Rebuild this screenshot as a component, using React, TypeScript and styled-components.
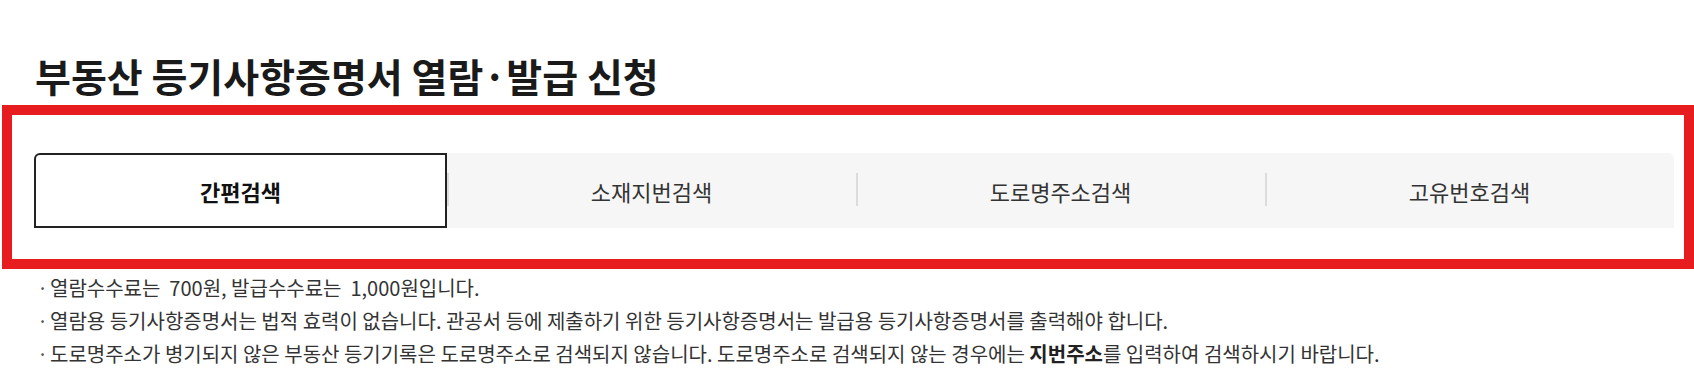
import React, { useState } from 'react';
import styled, { createGlobalStyle } from 'styled-components';

const tabs = ['간편검색', '소재지번검색', '도로명주소검색', '고유번호검색'];

const GlobalStyle = createGlobalStyle`
  html, body {
    margin: 0;
    padding: 0;
    background: #fff;
  }
  body {
    font-family: "Noto Sans CJK KR", "Noto Sans", sans-serif;
    color: #333;
  }
`;

const Page = styled.div`
  width: 1694px;
  height: 381px;
  overflow: hidden;
  display: flow-root;
`;

const Title = styled.h1`
  margin: 49px 0 0 35px;
  font-size: 39px;
  font-weight: 700;
  line-height: 52px;
  color: #1a1a1a;
`;

// red highlight frame around the search tabs
const Highlight = styled.section`
  margin: 4px 0 0 2px;
  border: 10px solid #e71c1f;
  padding: 38px 10px 31px 22px;
`;

const TabBar = styled.div`
  display: flex;
  height: 75px;
  background: #f6f6f6;
  border-radius: 6px 6px 0 0;
`;

const Tab = styled.button<{ $active: boolean; $divider: boolean }>`
  flex: 1;
  position: relative;
  display: flex;
  align-items: center;
  justify-content: center;
  margin: 0;
  padding: 0;
  font-family: inherit;
  font-size: 22px;
  font-weight: ${p => (p.$active ? 700 : 400)};
  color: ${p => (p.$active ? '#111' : '#333')};
  background: ${p => (p.$active ? '#fff' : 'transparent')};
  border: ${p => (p.$active ? '2px solid #222' : 'none')};
  border-radius: ${p => (p.$active ? '6px 0 0 0' : '0')};
  cursor: pointer;

  &::before {
    content: '';
    display: ${p => (p.$divider ? 'block' : 'none')};
    position: absolute;
    left: 0;
    top: 20px;
    width: 2px;
    height: 33px;
    background: #dcdcdc;
  }
`;

const Notes = styled.ul`
  list-style: none;
  margin: 2px 0 0;
  padding: 0 0 0 37px;
`;

const Note = styled.li`
  display: flex;
  font-size: 20px;
  line-height: 33px;
  color: #333;
  white-space: pre-wrap;

  &::before {
    content: '·';
    width: 13px;
    flex: none;
    color: #555;
  }

  b {
    font-weight: 700;
    color: #222;
  }
`;

export default function App() {
  const [active, setActive] = useState(0);

  return (
    <Page>
      <GlobalStyle />
      <Title>부동산 등기사항증명서 열람·발급 신청</Title>
      <Highlight>
        <TabBar>
          {tabs.map((label, i) => (
            <Tab
              key={label}
              $active={active === i}
              $divider={i > 0}
              onClick={() => setActive(i)}
            >
              {label}
            </Tab>
          ))}
        </TabBar>
      </Highlight>
      <Notes>
        <Note>열람수수료는  700원, 발급수수료는  1,000원입니다.</Note>
        <Note>열람용 등기사항증명서는 법적 효력이 없습니다. 관공서 등에 제출하기 위한 등기사항증명서는 발급용 등기사항증명서를 출력해야 합니다.</Note>
        <Note>
          <span>
            도로명주소가 병기되지 않은 부동산 등기기록은 도로명주소로 검색되지 않습니다. 도로명주소로 검색되지 않는 경우에는 <b>지번주소</b>를 입력하여 검색하시기 바랍니다.
          </span>
        </Note>
      </Notes>
    </Page>
  );
}
